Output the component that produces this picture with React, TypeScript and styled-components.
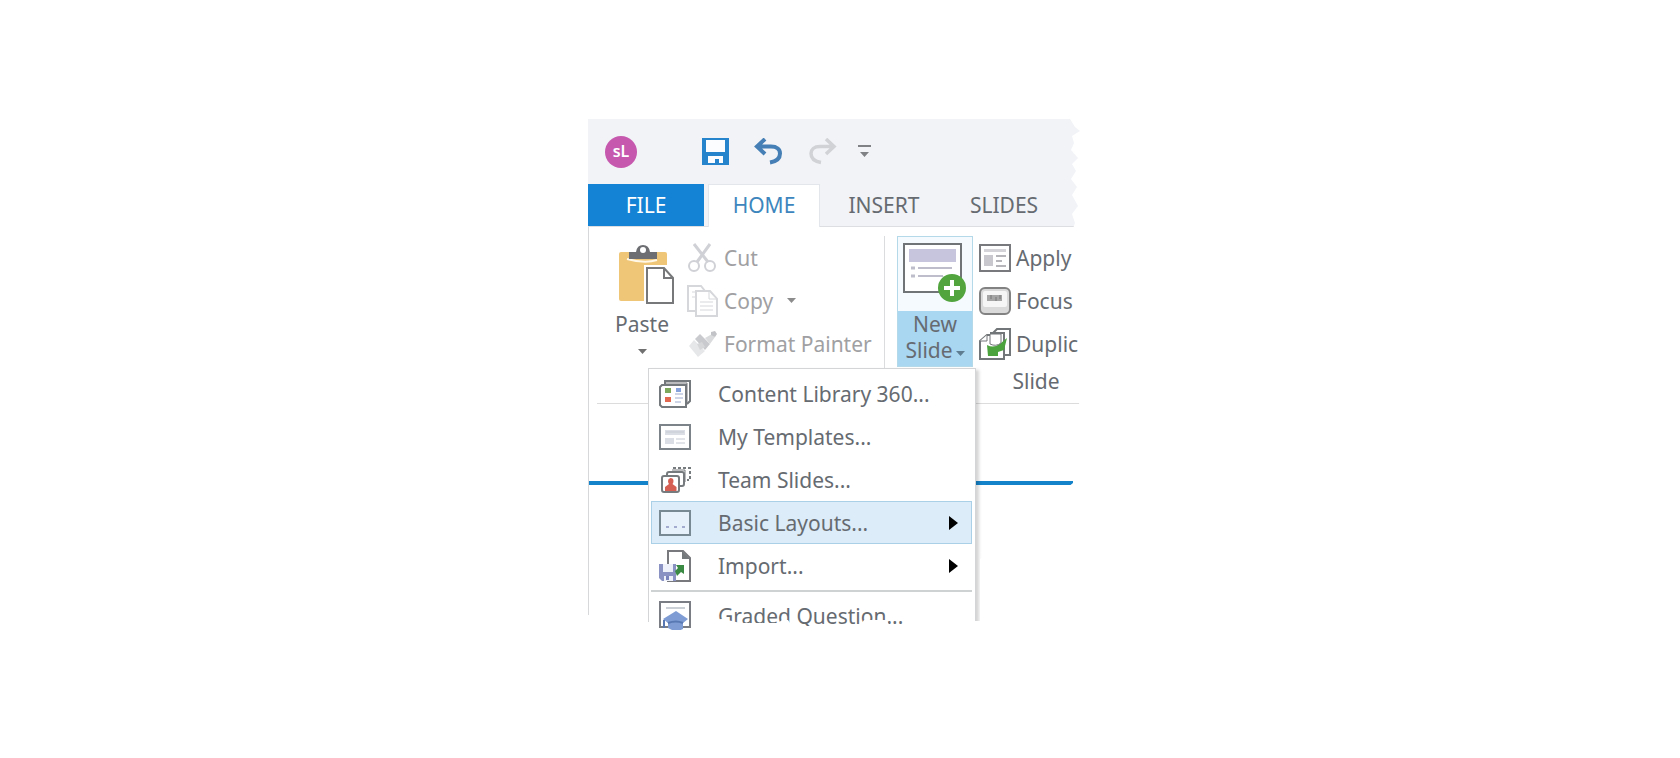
import React from 'react';
import styled, { createGlobalStyle } from 'styled-components';

const GlobalStyle = createGlobalStyle`
  *, *::before, *::after { box-sizing: border-box; }
  body { margin: 0; background: #fff; }
  button { font: inherit; color: inherit; background: none; border: 0; padding: 0; margin: 0; }
  svg { display: block; flex: none; }
`;

const Page = styled.main`
  min-height: 100vh;
  display: flex;
  align-items: center;
  justify-content: center;
  font-family: 'Noto Sans', 'Open Sans', sans-serif;
  font-size: 21px;
  line-height: 26px;
  color: #666b71;
`;

/* The window is cropped with a torn edge on the right and at the bottom. */
const AppWindow = styled.div`
  position: relative;
  width: 504px;
  max-width: 100%;
  min-height: 520px;
  overflow: hidden;
  clip-path: polygon(
    0 0, 482px 0, 487px 8px, 492px 12px, 484px 17px, 486px 24px, 483px 31px, 490px 39px,
    484px 45px, 488px 52px, 483px 60px, 489px 68px, 484px 76px, 490px 87px, 484px 95px,
    487px 104px, 484px 112px, 487px 125px, 487px 150px, 485px 160px, 487px 176px, 485px 184px,
    492px 200px, 490px 214px, 492px 236px, 491px 290px, 485px 330px, 485px 364px, 480px 368px,
    420px 420px, 392px 440px, 392px 502px, 386px 502px, 384px 507px, 302px 507px, 298px 501px,
    276px 501px, 272px 507px, 204px 507px, 200px 501px, 194px 501px, 190px 504px, 152px 504px,
    144px 502px, 134px 500px, 106px 502px, 104px 511px, 70px 511px, 68px 503px, 55px 503px,
    50px 496px, 0 496px
  );
`;

const TitleBar = styled.header`
  height: 65px;
  padding: 0 17px;
  display: flex;
  align-items: center;
  background: #f1f3f7;
`;

const Logo = styled.span`
  width: 32px;
  height: 32px;
  margin-right: 65px;
  border-radius: 50%;
  background: #c659ae;
  color: #fff;
  font-size: 16px;
  font-weight: 600;
  line-height: 31px;
  text-align: center;
`;

const QuickButton = styled.button<{ $gap?: number }>`
  margin-right: ${(p) => p.$gap ?? 25}px;
`;

const TabBar = styled.nav`
  height: 43px;
  display: flex;
  background: #f1f3f7;
  border-bottom: 1px solid #dcdee1;
`;

const Tab = styled.button<{ $kind?: 'file' | 'active' }>`
  flex: none;
  width: ${(p) => (p.$kind === 'file' ? 116 : 112)}px;
  height: ${(p) => (p.$kind === 'active' ? 43 : 42)}px;
  margin-right: ${(p) => (p.$kind === 'file' ? 4 : 8)}px;
  padding-bottom: ${(p) => (p.$kind === 'active' ? 2 : 0)}px;
  background: ${(p) => (p.$kind === 'file' ? '#1483d6' : p.$kind === 'active' ? '#fff' : 'transparent')};
  color: ${(p) => (p.$kind === 'file' ? '#fff' : p.$kind === 'active' ? '#3d86bd' : 'inherit')};
  border: solid #e3e6ea;
  border-width: ${(p) => (p.$kind === 'active' ? '1px 1px 0' : '0')};
`;

const Workspace = styled.div`
  border-left: 1px solid #d6d8da;
  min-height: 412px;
`;

const Ribbon = styled.section`
  height: 177px;
  margin-left: 8px;
  padding-top: 9px;
  display: flex;
  align-items: flex-start;
  border-bottom: 1px solid #dcdcdc;
`;

const PasteButton = styled.button`
  flex: none;
  width: 90px;
  padding-top: 9px;
  display: flex;
  flex-direction: column;
  align-items: center;
`;

const PasteLabel = styled.span`
  padding: 6px 0 12px;
`;

const Commands = styled.div<{ $width: number }>`
  flex: none;
  width: ${(p) => p.$width}px;
  display: flex;
  flex-direction: column;
`;

const Command = styled.button`
  height: 43px;
  display: flex;
  align-items: center;
  gap: 5px;
  white-space: nowrap;
  &:disabled { color: #a0a0a3; }
`;

const CommandText = styled.span`
  display: flex;
  align-items: center;
  gap: 14px;
`;

const Divider = styled.span`
  width: 1px;
  height: 133px;
  flex: none;
  margin-right: 12px;
  background: #dadcde;
`;

const NewSlideButton = styled.button`
  flex: none;
  width: 76px;
  height: 131px;
  margin-right: 6px;
  display: flex;
  flex-direction: column;
  border: 1px solid #b4dae9;
  background: #f4fafd;
`;

const NewSlideIcon = styled.span`
  height: 74px;
  padding: 5px 0 0 4px;
`;

const NewSlideLabel = styled.span`
  flex: 1;
  width: 100%;
  background: #a9d6f1;
`;

const LabelLine = styled.span`
  display: flex;
  align-items: center;
  justify-content: center;
  gap: 3px;
  & > svg { margin-top: 6px; }
`;

const GroupLabel = styled.span`
  line-height: 32px;
  text-align: center;
`;

const StageEdge = styled.div`
  height: 4px;
  margin-top: 77px;
  background: #1583c9;
`;

const Menu = styled.div`
  position: absolute;
  left: 60px;
  top: 249px;
  width: 328px;
  padding: 3px 3px 0 2px;
  border: 1px solid #d3d5d7;
  background: #fff;
  box-shadow: 3px 2px 3px rgba(0, 0, 0, 0.17);
`;

const MenuItem = styled.button<{ $selected?: boolean }>`
  width: 100%;
  height: 43px;
  padding: 0 13px 0 7px;
  display: flex;
  align-items: center;
  gap: 27px;
  text-align: left;
  white-space: nowrap;
  border: 1px solid ${(p) => (p.$selected ? '#a9d0e6' : 'transparent')};
  background: ${(p) => (p.$selected ? '#dcecf9' : 'transparent')};
`;

const MenuText = styled.span`
  flex: 1;
`;

const MenuRule = styled.hr`
  height: 2px;
  margin: 3px 0 2px;
  border: 0;
  background: #cfd2d3;
`;

const Caret = ({ color = '#707070' }: { color?: string }) => (
  <svg width="9" height="5" viewBox="0 0 9 5"><path d="M0 0h9L4.500 5z" fill={color} /></svg>
);

const SubmenuArrow = () => (
  <svg width="9" height="14" viewBox="0 0 9 14"><path d="M0 0l9 7-9 7z" fill="#000" /></svg>
);

const SaveIcon = () => (
  <svg width="27" height="27" viewBox="0 0 27 27">
    <path d="M0 0h27v27H0z" fill="#2584cb" />
    <path d="M4 2h19v12H4zM6 18h15v7h-4v-4h-4v4H6z" fill="#fbfdff" />
  </svg>
);

const UndoIcon = () => (
  <svg width="29" height="27" viewBox="0 0 29 27" fill="none" stroke="#457fb5" strokeWidth="4">
    <path d="M11 1L3 8.500l8 7.500M4 8.500h13c6 0 9 3 9 7 0 5-4 8-10 9" />
  </svg>
);

const RedoIcon = () => (
  <svg width="29" height="27" viewBox="0 0 29 27" fill="none" stroke="#d1d2d5" strokeWidth="3.500">
    <path d="M18 1l8 7.500-8 7.500M25 8.500H12c-6 0-9 3-9 7 0 5 4 8 10 9" />
  </svg>
);

const CustomizeIcon = () => (
  <svg width="13" height="13" viewBox="0 0 13 13" fill="#808184">
    <path d="M0 0h13v2H0zM2 7h9l-4.500 5z" />
  </svg>
);

const PasteIcon = () => (
  <svg width="66" height="60" viewBox="-10 0 66 60">
    <path d="M2 7h44q2 0 2 2v47H2q-2 0-2-2V9q0-2 2-2z" fill="#efc677" />
    <path d="M8 14q18 5 30 1" fill="none" stroke="#fff8e8" strokeWidth="2" />
    <path d="M25 20h31v40H25z" fill="#fff" />
    <path d="M10 7h7q1-7 7-7t7 7h7v7H10z" fill="#6c6e71" />
    <circle cx="24" cy="5" r="3" fill="#fff" />
    <path d="M28 23h17l9 10v25H28zM45 23v10h9" fill="#fff" stroke="#77787a" strokeWidth="2" />
  </svg>
);

const CutIcon = () => (
  <svg width="32" height="30" viewBox="0 0 32 30" fill="none" stroke="#d0d1d6" strokeWidth="2">
    <path d="M7 1l14 18M23 1L10 19" strokeWidth="3" />
    <circle cx="7" cy="23" r="5" /><circle cx="23" cy="23" r="5" />
  </svg>
);

const CopyIcon = () => (
  <svg width="32" height="32" viewBox="0 0 32 32" fill="#fff" stroke="#d6d7da" strokeWidth="2">
    <path d="M1 1h13l4 5v20H1z" /><path d="M9 6h14l7 8v17H9z" />
    <path d="M22 7v7h7M13 17h13M13 21h13M13 25h13M5 7h4M5 12h3" strokeWidth="1" />
  </svg>
);

const PainterIcon = () => (
  <svg width="32" height="28" viewBox="0 0 32 28">
    <path d="M13 4l10 10-5 6L8 9z" fill="#c9cacd" />
    <path d="M7 10l11 11-7 6L2 16z" fill="#e6e7e9" />
    <path d="M10 14l5-2 3 5-5 3z" fill="#d6d7d9" />
    <path d="M18 8l7-4 3 3-5 7z" fill="#dadbdd" />
    <path d="M24 2l4-1 2 3-2 3-4-2z" fill="#c2c3c6" />
  </svg>
);

const SlidePlusIcon = () => (
  <svg width="66" height="61" viewBox="0 0 66 61">
    <path d="M2 2h57v48H2z" fill="#fff" stroke="#717477" strokeWidth="2" />
    <path d="M7 7h47v13H7z" fill="#c7c4de" />
    <path d="M9 26h4M9 34h4" stroke="#bdbdcc" strokeWidth="3" />
    <path d="M16 26h34M16 34h25" stroke="#bdbdcc" strokeWidth="2" />
    <circle cx="50" cy="46" r="14" fill="#51a43e" />
    <path d="M50 38v16M42 46h16" stroke="#fff" strokeWidth="4" />
  </svg>
);

const LayoutIcon = () => (
  <svg width="32" height="28" viewBox="0 0 32 28">
    <path d="M1 1h30v26H1z" fill="#fff" stroke="#77797c" strokeWidth="2" />
    <path d="M5 5h22v3H5z" fill="#d3d3d8" />
    <path d="M5 11h9v11H5z" fill="#c8c8ce" />
    <path d="M17 12h10M17 17h6M17 22h10" stroke="#b5b5ba" strokeWidth="2" />
  </svg>
);

const FocusIcon = () => (
  <svg width="32" height="28" viewBox="0 0 32 28">
    <rect x="1" y="1" width="30" height="26" rx="5" fill="#dadada" stroke="#828282" strokeWidth="2" />
    <rect x="4" y="4" width="24" height="16" rx="2" fill="#f6f6f6" />
    <path d="M8 8h15v6H8z" fill="#a5a5a5" />
    <path d="M12 8v4M17 10v4M21 8v4" stroke="#777" />
  </svg>
);

const DuplicateIcon = () => (
  <svg width="32" height="32" viewBox="0 0 32 32" fill="#fff" stroke="#737678" strokeWidth="2">
    <path d="M14 5l4-4h13v26H14z" />
    <path d="M1 13l7-6h4v-2h13v26H1z" />
    <path d="M1 13h7V7" strokeWidth="1" />
    <path d="M8 17q7 4 14-2l6-5-3 12-6 2v4H9z" fill="#4aa33c" stroke="none" />
    <path d="M11 6h11v9q-5 4-11 1z" strokeWidth="1" />
  </svg>
);

const LibraryIcon = () => (
  <svg width="32" height="28" viewBox="0 0 32 28" fill="#fff" stroke="#74797d" strokeWidth="2">
    <path d="M6 4V1h25v20l-3 3" /><path d="M3 5h24v22H3l-2-2V7z" /><path d="M5 3h23v20" strokeWidth="1" fill="none" />
    <path d="M6 8h6v5H6z" fill="#7da95d" stroke="none" />
    <path d="M6 17h6v5H6z" fill="#e2684f" stroke="none" />
    <path d="M17 8h5v4h-5z" fill="#85a2dc" stroke="none" />
    <path d="M16 14h8M16 18h8M16 22h6" stroke="#9eabd0" strokeWidth="1" />
  </svg>
);

const TemplateIcon = () => (
  <svg width="32" height="26" viewBox="0 0 32 26">
    <path d="M1 1h30v24H1z" fill="#fff" stroke="#7c8489" strokeWidth="2" />
    <path d="M6 6h20v5H6zM6 14h9v6H6z" fill="#dcdee5" />
    <path d="M17 15h9M17 19h9M7 8h18" stroke="#c4c9d2" />
  </svg>
);

const TeamIcon = () => (
  <svg width="32" height="26" viewBox="0 0 32 26" fill="#fff" stroke="#767b7e" strokeWidth="2">
    <path d="M15 2V1h16v12h-3" strokeDasharray="3 2" />
    <rect x="8" y="5" width="17" height="14" rx="2" />
    <path d="M13 3h13v12" fill="none" strokeWidth="1" />
    <rect x="3" y="9" width="17" height="16" rx="2" />
    <path d="M11.500 11a3 3 0 013 3q0 2-1 3l4 3v4H6v-4l4-3q-1-1-1-3a3 3 0 012.500-3z" fill="#d65f54" stroke="none" />
  </svg>
);

const BasicIcon = () => (
  <svg width="32" height="26" viewBox="0 0 32 26">
    <path d="M1 1h30v24H1z" fill="#e6f1fc" stroke="#788993" strokeWidth="2" />
    <path d="M7 17h3M15 17h3M23 17h3" stroke="#a3acce" strokeWidth="2" />
  </svg>
);

const ImportIcon = () => (
  <svg width="32" height="32" viewBox="0 0 32 32">
    <path d="M9 1h15l7 7v23H9z" fill="#fff" stroke="#77797c" strokeWidth="2" />
    <path d="M23 1v8h8z" fill="#74797c" />
    <path d="M0 14h17v17H3l-3-3z" fill="#8a91c3" />
    <path d="M4 14h10v8H4zM5 26h9v5H5z" fill="#eef0fa" />
    <path d="M7 26h3v4H7z" fill="#7b84bd" />
    <path d="M16 21l3-3-2-3h8v9l-3-2-4 4z" fill="#3a8a43" />
  </svg>
);

const GradedIcon = () => (
  <svg width="32" height="32" viewBox="0 0 32 32">
    <path d="M1 2h30v25H1z" fill="#fff" stroke="#7a7d83" strokeWidth="2" />
    <path d="M7 8h19" stroke="#cbd0d6" strokeWidth="2" />
    <path d="M17 11l12 8-5 4v6l-7 3-8-4v-5l-5-4z" fill="#7f9dd4" />
    <path d="M5 20v8M9 23q8-3 15 0" fill="none" stroke="#5878b4" strokeWidth="2" />
  </svg>
);

const menuItems = [
  { label: 'Content Library 360...', Icon: LibraryIcon },
  { label: 'My Templates...', Icon: TemplateIcon },
  { label: 'Team Slides...', Icon: TeamIcon },
  { label: 'Basic Layouts...', Icon: BasicIcon, submenu: true, selected: true },
  { label: 'Import...', Icon: ImportIcon, submenu: true },
];

export default function App() {
  return (
    <>
      <GlobalStyle />
      <Page>
        <AppWindow>
          <TitleBar>
            <Logo>sL</Logo>
            <QuickButton aria-label="Save"><SaveIcon /></QuickButton>
            <QuickButton aria-label="Undo"><UndoIcon /></QuickButton>
            <QuickButton aria-label="Redo" $gap={21}><RedoIcon /></QuickButton>
            <QuickButton aria-label="Customize toolbar"><CustomizeIcon /></QuickButton>
          </TitleBar>
          <TabBar>
            <Tab $kind="file">FILE</Tab>
            <Tab $kind="active">HOME</Tab>
            <Tab>INSERT</Tab>
            <Tab>SLIDES</Tab>
          </TabBar>
          <Workspace>
            <Ribbon>
              <PasteButton><PasteIcon /><PasteLabel>Paste</PasteLabel><Caret /></PasteButton>
              <Commands $width={197}>
                <Command disabled><CutIcon /><CommandText>Cut</CommandText></Command>
                <Command disabled><CopyIcon /><CommandText>Copy<Caret color="#8c8c8c" /></CommandText></Command>
                <Command disabled><PainterIcon /><CommandText>Format Painter</CommandText></Command>
              </Commands>
              <Divider />
              <NewSlideButton>
                <NewSlideIcon><SlidePlusIcon /></NewSlideIcon>
                <NewSlideLabel>
                  <LabelLine>New</LabelLine>
                  <LabelLine>Slide<Caret color="#5f7d90" /></LabelLine>
                </NewSlideLabel>
              </NewSlideButton>
              <Commands $width={114}>
                <Command><LayoutIcon /><CommandText>Apply</CommandText></Command>
                <Command><FocusIcon /><CommandText>Focus</CommandText></Command>
                <Command><DuplicateIcon /><CommandText>Duplic</CommandText></Command>
                <GroupLabel>Slide</GroupLabel>
              </Commands>
            </Ribbon>
            <StageEdge />
          </Workspace>
          <Menu>
            {menuItems.map(({ label, Icon, submenu, selected }) => (
              <MenuItem key={label} $selected={selected}>
                <Icon />
                <MenuText>{label}</MenuText>
                {submenu && <SubmenuArrow />}
              </MenuItem>
            ))}
            <MenuRule />
            <MenuItem><GradedIcon /><MenuText>Graded Question...</MenuText></MenuItem>
          </Menu>
        </AppWindow>
      </Page>
    </>
  );
}
